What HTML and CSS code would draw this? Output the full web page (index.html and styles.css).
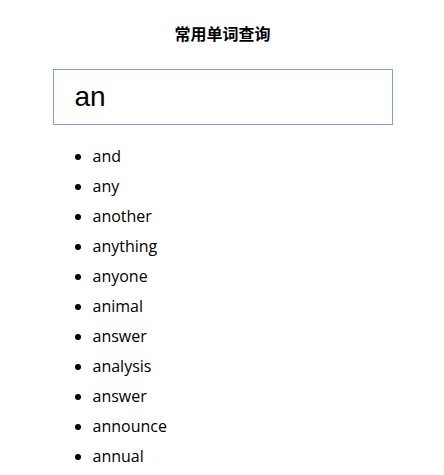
FILE: index.html
```html
<!DOCTYPE html>
<html lang="zh">
<head>
<meta charset="utf-8">
<title>常用单词查询</title>
<link rel="stylesheet" href="styles.css">
</head>
<body>
<div class="app">
  <h1 class="title">常用单词查询</h1>
  <div class="search"><span class="search-text">an</span></div>
  <ul class="results">
    <li>and</li>
    <li>any</li>
    <li>another</li>
    <li>anything</li>
    <li>anyone</li>
    <li>animal</li>
    <li>answer</li>
    <li>analysis</li>
    <li>answer</li>
    <li>announce</li>
    <li>annual</li>
  </ul>
</div>
</body>
</html>
```

FILE: styles.css
```css
html, body {
  margin: 0;
  padding: 0;
  background: #ffffff;
  overflow: hidden;
}
.app {
  width: 340px;
  margin: 0 auto;
  padding-top: 22px;
  padding-left: 1px;
}
.title {
  margin: 0;
  font-family: "Noto Sans CJK SC", "Noto Sans", sans-serif;
  font-weight: bold;
  font-size: 16px;
  line-height: 22px;
  text-align: center;
  color: #000;
}
.search {
  margin-top: 25px;
  box-sizing: border-box;
  height: 56px;
  border: 1px solid #7e9de3;
  padding-left: 21px;
  display: flex;
  align-items: center;
  font-family: "Liberation Sans", Arial, sans-serif;
  font-size: 28px;
  color: #000;
}
.results {
  margin: 16px 0 0 0;
  padding-left: 40px;
  font-family: "Open Sans", "Noto Sans", sans-serif;
  font-size: 16px;
  line-height: 30px;
  color: #000;
}
```
